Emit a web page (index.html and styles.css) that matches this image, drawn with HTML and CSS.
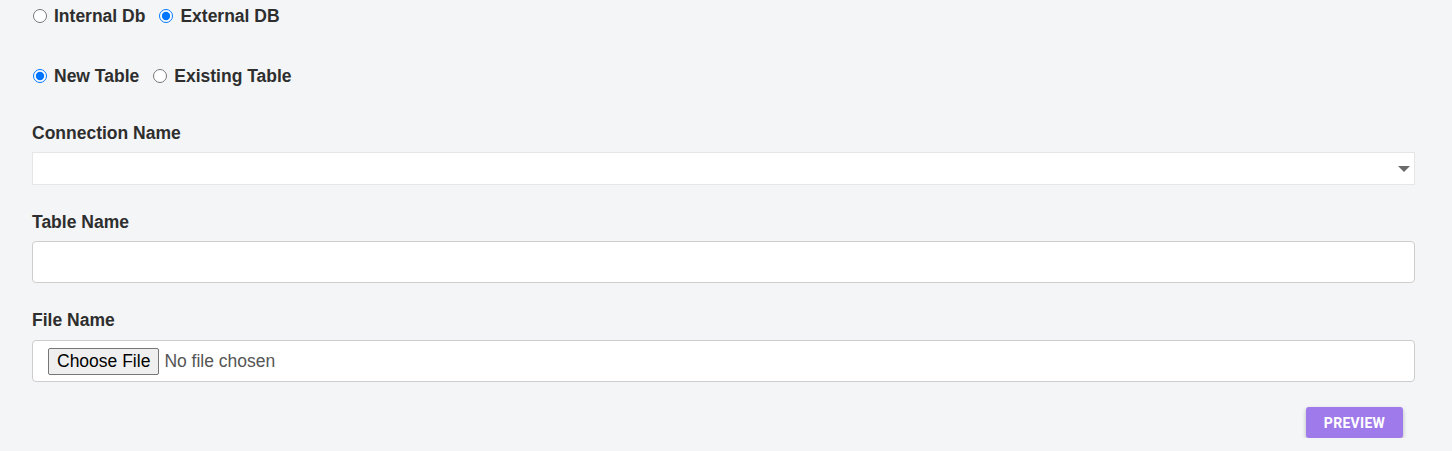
FILE: index.html
```html
<!DOCTYPE html>
<html>
<head>
<meta charset="utf-8">
<link rel="stylesheet" href="styles.css">
</head>
<body>
<div class="form">
  <div class="radio-row first">
    <label class="radio"><input type="radio" name="db"><span>Internal Db</span></label>
    <label class="radio"><input type="radio" name="db" checked><span>External DB</span></label>
  </div>
  <div class="radio-row second">
    <label class="radio"><input type="radio" name="tbl" checked><span>New Table</span></label>
    <label class="radio"><input type="radio" name="tbl"><span>Existing Table</span></label>
  </div>
  <div class="field conn">
    <div class="label">Connection Name</div>
    <div class="select-wrap"><select class="select"><option></option></select></div>
  </div>
  <div class="field">
    <div class="label">Table Name</div>
    <input type="text" class="text-input">
  </div>
  <div class="field file">
    <div class="label">File Name</div>
    <input type="file" class="file-input">
  </div>
  <div class="actions">
    <button class="preview">PREVIEW</button>
  </div>
</div>
</body>
</html>
```
FILE: styles.css
```css
html, body {
  margin: 0;
  padding: 0;
  background: #f4f5f7;
}
.form {
  padding: 0 37px 0 32px;
  font-family: "Liberation Sans", Arial, sans-serif;
  color: #2e2e2e;
}
.radio-row {
  display: flex;
  align-items: center;
  height: 32px;
  gap: 13px;
}
.radio-row.second {
  margin-top: 28px;
  gap: 13px;
}
.radio {
  display: flex;
  align-items: center;
  gap: 7px;
  font-size: 17.5px;
  font-weight: bold;
}
.radio input {
  margin: 0 0 0 1px;
  width: 14px;
  height: 14px;
}
.field {
  margin-top: 27px;
}
.field.conn {
  margin-top: 31px;
}
.label {
  font-size: 17.5px;
  font-weight: bold;
  line-height: 20px;
  height: 20px;
}
.select-wrap {
  position: relative;
  margin-top: 9px;
}
.select-wrap::after {
  content: "";
  position: absolute;
  right: 5px;
  top: 14px;
  border-left: 6px solid transparent;
  border-right: 6px solid transparent;
  border-top: 6px solid #6b6b6b;
}
.select {
  display: block;
  width: 100%;
  height: 33px;
  box-sizing: border-box;
  appearance: none;
  -webkit-appearance: none;
  background: #fff;
  border: 1px solid #e6e6e6;
  border-radius: 0;
  outline: none;
}
.text-input {
  display: block;
  margin-top: 9px;
  width: 100%;
  height: 42px;
  box-sizing: border-box;
  border: 1px solid #cdcdcd;
  border-radius: 4px;
  background: #fff;
  outline: none;
}
.file-input {
  display: block;
  margin-top: 10px;
  width: 100%;
  height: 42px;
  box-sizing: border-box;
  border: 1px solid #cdcdcd;
  border-radius: 4px;
  background: #fff;
  padding: 0 15px;
  font-family: "Liberation Sans", Arial, sans-serif;
  font-size: 17.5px;
  color: #555;
  line-height: 40px;
}
.file-input::file-selector-button {
  font-family: "Liberation Sans", Arial, sans-serif;
  font-size: 17.5px;
  color: #000;
  height: 27px;
  padding: 0 8px;
  margin: 0 5px 0 0;
  border: 1px solid #767676;
  border-radius: 2px;
  background: #efefef;
}
.actions {
  display: flex;
  justify-content: flex-end;
  margin-top: 25px;
  padding-right: 12px;
}
.preview {
  width: 97px;
  height: 31px;
  background: #9f7aea;
  color: #fff;
  border: none;
  border-radius: 3px;
  font-family: Roboto, sans-serif;
  font-weight: bold;
  font-size: 14px;
  letter-spacing: 0.3px;
  box-shadow: 0 2px 4px rgba(0,0,0,0.25);
  padding: 0;
}
```
